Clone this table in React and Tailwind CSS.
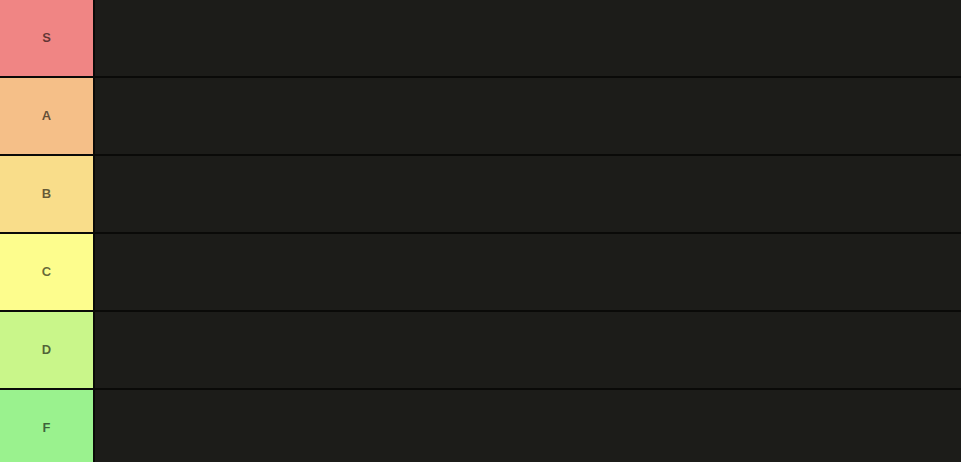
import React from 'react';

const tiers = [
  { label: 'S', bg: 'bg-[#f08584]' },
  { label: 'A', bg: 'bg-[#f5bf88]' },
  { label: 'B', bg: 'bg-[#f9dd8a]' },
  { label: 'C', bg: 'bg-[#fdfd8d]' },
  { label: 'D', bg: 'bg-[#c9f68a]' },
  { label: 'F', bg: 'bg-[#9af28e]' },
];

export default function App() {
  return (
    <div className="w-[961px] h-[462px] overflow-hidden bg-[#1b1b18] font-['Liberation_Sans',Arial,sans-serif]">
      {tiers.map((t) => (
        <div key={t.label} className="flex h-[78px] border-b-2 border-[#0a0a08]">
          <div className={`w-[95px] shrink-0 flex items-center justify-center border-r-2 border-[#0a0a08] ${t.bg}`}>
            <span className="text-[13px] font-semibold text-black/60 -mt-px">{t.label}</span>
          </div>
          <div className="flex-1 bg-[#1c1c19]"></div>
        </div>
      ))}
    </div>
  );
}
